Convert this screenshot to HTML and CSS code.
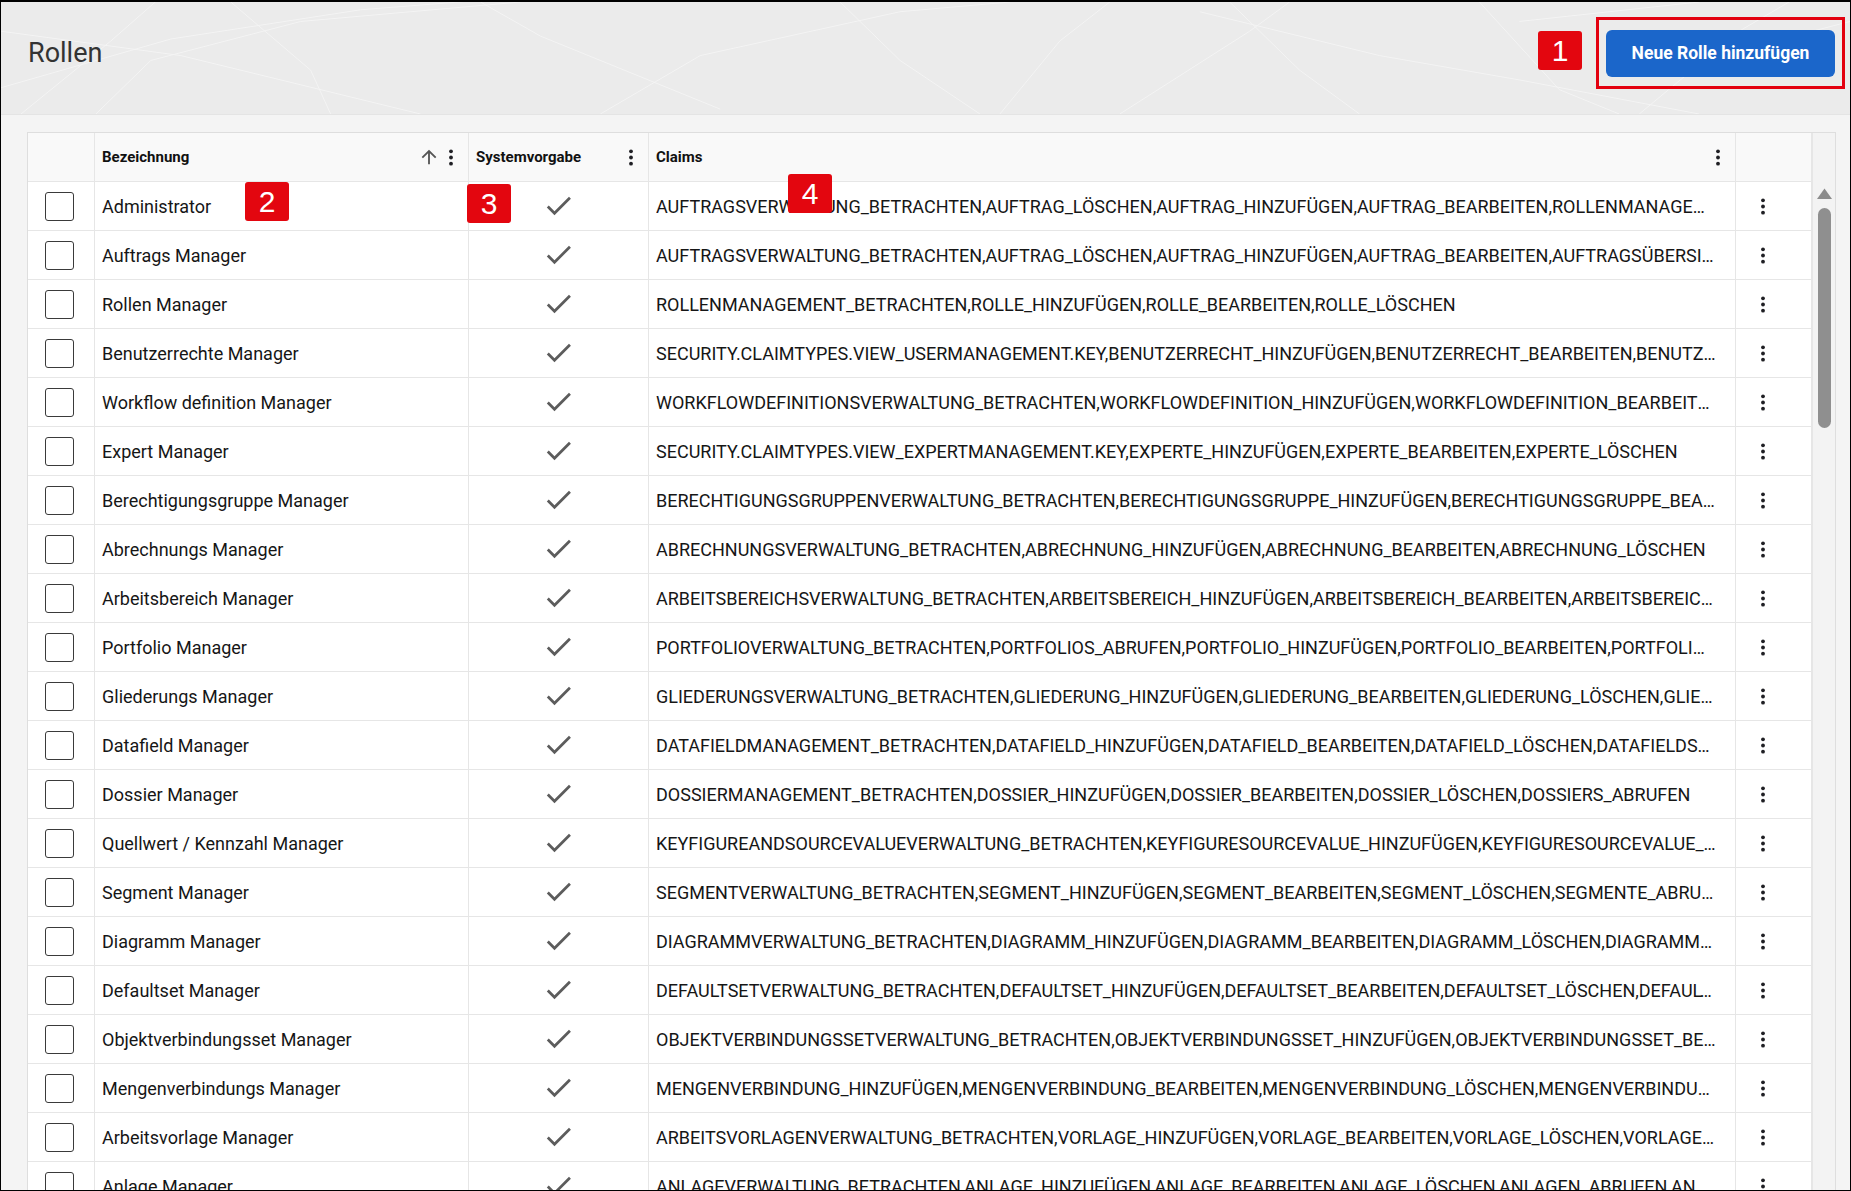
FILE: index.html
```html
<!DOCTYPE html>
<html lang="de">
<head>
  <meta charset="UTF-8">
  <meta name="viewport" content="width=device-width, initial-scale=1.0">
  <title>Rollen</title>
  <link rel="stylesheet" href="styles.css">
</head>
<body>
  <div class="page">
    <header class="page-header">
      <svg class="header-mesh" viewBox="0 0 1851 115" preserveAspectRatio="none">
        <g stroke="#ffffff" stroke-width="1" fill="none" opacity="0.45">
          <polyline points="0,88 170,38 360,8 520,-5"/>
          <polyline points="20,115 110,40 160,-5"/>
          <polyline points="95,115 150,60 300,20 520,0"/>
          <polyline points="230,0 310,70 330,115"/>
          <polyline points="0,30 180,55 420,115"/>
          <polyline points="480,0 540,35 720,110"/>
          <polyline points="600,115 700,55 900,10 1010,0"/>
          <polyline points="840,0 900,60 980,115"/>
          <polyline points="1000,115 1060,40 1110,0"/>
          <polyline points="1120,115 1250,30 1290,0"/>
          <polyline points="1200,10 1380,55 1520,80 1700,115"/>
          <polyline points="1230,0 1300,70 1360,115"/>
          <polyline points="1480,0 1560,90 1620,115"/>
          <polyline points="1520,20 1700,0"/>
          <polyline points="1640,115 1740,30 1790,0"/>
          <polyline points="1700,60 1851,20"/>
        </g>
      </svg>
      <h1 class="page-title">Rollen</h1>
      <button class="primary-btn">Neue Rolle hinzufügen</button>
    </header>

    <main class="content">
      <div class="table">
        <div class="grid" id="grid">
          <div class="row head">
            <div class="cell"></div>
            <div class="cell title-cell">
              <span>Bezeichnung</span>
              <span class="head-tools">
                <svg class="sort-icon" viewBox="0 0 24 24"><path d="M4 12l1.41 1.41L11 7.83V20h2V7.83l5.58 5.59L20 12l-8-8-8 8z"/></svg>
                <svg class="kebab" viewBox="0 0 6 20"><circle cx="3" cy="3.5" r="2"/><circle cx="3" cy="10" r="2"/><circle cx="3" cy="16.5" r="2"/></svg>
              </span>
            </div>
            <div class="cell title-cell">
              <span>Systemvorgabe</span>
              <svg class="kebab" viewBox="0 0 6 20"><circle cx="3" cy="3.5" r="2"/><circle cx="3" cy="10" r="2"/><circle cx="3" cy="16.5" r="2"/></svg>
            </div>
            <div class="cell title-cell">
              <span>Claims</span>
              <svg class="kebab" viewBox="0 0 6 20"><circle cx="3" cy="3.5" r="2"/><circle cx="3" cy="10" r="2"/><circle cx="3" cy="16.5" r="2"/></svg>
            </div>
            <div class="cell"></div>
          </div>
        </div>
        <div class="scrollbar">
          <svg class="scroll-arrow" viewBox="0 0 15 11"><path d="M7.5 0.5L15 11H0z"/></svg>
          <div class="scroll-thumb"></div>
        </div>
      </div>
    </main>

    <div class="callout-frame"></div>
    <div class="marker m1">1</div>
    <div class="marker m2">2</div>
    <div class="marker m3">3</div>
    <div class="marker m4">4</div>
  </div>

  <script>
    const roles = [
      ['Administrator', 'AUFTRAGSVERWALTUNG_BETRACHTEN,AUFTRAG_LÖSCHEN,AUFTRAG_HINZUFÜGEN,AUFTRAG_BEARBEITEN,ROLLENMANAGEMENT_BETRACHTEN,ROLLE_HINZUFÜGEN'],
      ['Auftrags Manager', 'AUFTRAGSVERWALTUNG_BETRACHTEN,AUFTRAG_LÖSCHEN,AUFTRAG_HINZUFÜGEN,AUFTRAG_BEARBEITEN,AUFTRAGSÜBERSICHT_ABRUFEN'],
      ['Rollen Manager', 'ROLLENMANAGEMENT_BETRACHTEN,ROLLE_HINZUFÜGEN,ROLLE_BEARBEITEN,ROLLE_LÖSCHEN'],
      ['Benutzerrechte Manager', 'SECURITY.CLAIMTYPES.VIEW_USERMANAGEMENT.KEY,BENUTZERRECHT_HINZUFÜGEN,BENUTZERRECHT_BEARBEITEN,BENUTZERRECHT_LÖSCHEN'],
      ['Workflow definition Manager', 'WORKFLOWDEFINITIONSVERWALTUNG_BETRACHTEN,WORKFLOWDEFINITION_HINZUFÜGEN,WORKFLOWDEFINITION_BEARBEITEN,WORKFLOWDEFINITION_LÖSCHEN'],
      ['Expert Manager', 'SECURITY.CLAIMTYPES.VIEW_EXPERTMANAGEMENT.KEY,EXPERTE_HINZUFÜGEN,EXPERTE_BEARBEITEN,EXPERTE_LÖSCHEN'],
      ['Berechtigungsgruppe Manager', 'BERECHTIGUNGSGRUPPENVERWALTUNG_BETRACHTEN,BERECHTIGUNGSGRUPPE_HINZUFÜGEN,BERECHTIGUNGSGRUPPE_BEARBEITEN,BERECHTIGUNGSGRUPPE_LÖSCHEN'],
      ['Abrechnungs Manager', 'ABRECHNUNGSVERWALTUNG_BETRACHTEN,ABRECHNUNG_HINZUFÜGEN,ABRECHNUNG_BEARBEITEN,ABRECHNUNG_LÖSCHEN'],
      ['Arbeitsbereich Manager', 'ARBEITSBEREICHSVERWALTUNG_BETRACHTEN,ARBEITSBEREICH_HINZUFÜGEN,ARBEITSBEREICH_BEARBEITEN,ARBEITSBEREICH_LÖSCHEN'],
      ['Portfolio Manager', 'PORTFOLIOVERWALTUNG_BETRACHTEN,PORTFOLIOS_ABRUFEN,PORTFOLIO_HINZUFÜGEN,PORTFOLIO_BEARBEITEN,PORTFOLIO_LÖSCHEN'],
      ['Gliederungs Manager', 'GLIEDERUNGSVERWALTUNG_BETRACHTEN,GLIEDERUNG_HINZUFÜGEN,GLIEDERUNG_BEARBEITEN,GLIEDERUNG_LÖSCHEN,GLIEDERUNGEN_ABRUFEN'],
      ['Datafield Manager', 'DATAFIELDMANAGEMENT_BETRACHTEN,DATAFIELD_HINZUFÜGEN,DATAFIELD_BEARBEITEN,DATAFIELD_LÖSCHEN,DATAFIELDS_ABRUFEN'],
      ['Dossier Manager', 'DOSSIERMANAGEMENT_BETRACHTEN,DOSSIER_HINZUFÜGEN,DOSSIER_BEARBEITEN,DOSSIER_LÖSCHEN,DOSSIERS_ABRUFEN'],
      ['Quellwert / Kennzahl Manager', 'KEYFIGUREANDSOURCEVALUEVERWALTUNG_BETRACHTEN,KEYFIGURESOURCEVALUE_HINZUFÜGEN,KEYFIGURESOURCEVALUE_BEARBEITEN'],
      ['Segment Manager', 'SEGMENTVERWALTUNG_BETRACHTEN,SEGMENT_HINZUFÜGEN,SEGMENT_BEARBEITEN,SEGMENT_LÖSCHEN,SEGMENTE_ABRUFEN'],
      ['Diagramm Manager', 'DIAGRAMMVERWALTUNG_BETRACHTEN,DIAGRAMM_HINZUFÜGEN,DIAGRAMM_BEARBEITEN,DIAGRAMM_LÖSCHEN,DIAGRAMME_ABRUFEN'],
      ['Defaultset Manager', 'DEFAULTSETVERWALTUNG_BETRACHTEN,DEFAULTSET_HINZUFÜGEN,DEFAULTSET_BEARBEITEN,DEFAULTSET_LÖSCHEN,DEFAULTSETS_ABRUFEN'],
      ['Objektverbindungsset Manager', 'OBJEKTVERBINDUNGSSETVERWALTUNG_BETRACHTEN,OBJEKTVERBINDUNGSSET_HINZUFÜGEN,OBJEKTVERBINDUNGSSET_BEARBEITEN'],
      ['Mengenverbindungs Manager', 'MENGENVERBINDUNG_HINZUFÜGEN,MENGENVERBINDUNG_BEARBEITEN,MENGENVERBINDUNG_LÖSCHEN,MENGENVERBINDUNGEN_ABRUFEN'],
      ['Arbeitsvorlage Manager', 'ARBEITSVORLAGENVERWALTUNG_BETRACHTEN,VORLAGE_HINZUFÜGEN,VORLAGE_BEARBEITEN,VORLAGE_LÖSCHEN,VORLAGEN_ABRUFEN'],
      ['Anlage Manager', 'ANLAGEVERWALTUNG_BETRACHTEN,ANLAGE_HINZUFÜGEN,ANLAGE_BEARBEITEN,ANLAGE_LÖSCHEN,ANLAGEN_ABRUFEN,ANLAGE_EXPORTIEREN']
    ];

    const check = '<svg class="check" viewBox="3 5 18.6 14.6"><path d="M9 16.17L4.83 12l-1.42 1.41L9 19 21 7l-1.41-1.41z"/></svg>';
    const kebab = '<svg class="kebab" viewBox="0 0 6 20"><circle cx="3" cy="3.5" r="2"/><circle cx="3" cy="10" r="2"/><circle cx="3" cy="16.5" r="2"/></svg>';
    const grid = document.getElementById('grid');

    roles.forEach(function(role) {
      const row = document.createElement('div');
      row.className = 'row';
      row.innerHTML =
        '<div class="cell select-cell"><span class="checkbox"></span></div>' +
        '<div class="cell">' + role[0] + '</div>' +
        '<div class="cell center">' + check + '</div>' +
        '<div class="cell"><span class="claims">' + role[1] + '</span></div>' +
        '<div class="cell action-cell">' + kebab + '</div>';
      grid.appendChild(row);
    });
  </script>
</body>
</html>
```

FILE: styles.css
```css
* {
  box-sizing: border-box;
}
body {
  margin: 0;
  font-family: Roboto, "Liberation Sans", sans-serif;
  color: #161616;
  background: #000;
}
.page {
  position: relative;
  width: 1851px;
  height: 1191px;
  border: 1px solid #000;
  border-top-width: 2px;
  background: #f4f4f4;
  overflow: hidden;
  display: flex;
  flex-direction: column;
}
.page-header {
  position: relative;
  height: 113px;
  flex-shrink: 0;
  display: flex;
  align-items: center;
  justify-content: space-between;
  padding: 0 15px 10px 27px;
  background: #ebebeb;
  border-bottom: 1px solid #e4e4e4;
}
.header-mesh {
  position: absolute;
  left: 0;
  top: 0;
  width: 100%;
  height: 100%;
}
.page-title {
  position: relative;
  margin: 0;
  font-size: 27px;
  font-weight: 400;
  color: #333;
}
.primary-btn {
  position: relative;
  height: 47px;
  width: 229px;
  border: none;
  border-radius: 6px;
  background: #1b66ca;
  color: #fff;
  font-family: Roboto, sans-serif;
  font-size: 17.5px;
  font-weight: 700;
  cursor: pointer;
}
.content {
  flex: 1;
  min-height: 0;
  padding: 17px 14px 0 26px;
}
.table {
  display: flex;
  height: 1200px;
  border: 1px solid #dedede;
  background: #fff;
}
.grid {
  width: 1784px;
}
.row {
  display: grid;
  grid-template-columns: 67px 374px 180px 1087px 76px;
  height: 49px;
  border-bottom: 1px solid #e6e6e6;
  font-size: 18px;
}
.row.head {
  background: #f9f9f9;
  font-size: 15px;
  font-weight: 700;
  color: #111;
}
.cell {
  display: flex;
  align-items: center;
  min-width: 0;
  padding: 0 7px;
  border-right: 1px solid #e6e6e6;
  white-space: nowrap;
}
.cell.center {
  justify-content: center;
  padding: 0;
}
.select-cell {
  justify-content: center;
  padding: 0 3px 0 0;
}
.action-cell {
  padding-left: 24px;
}
.title-cell {
  justify-content: space-between;
  padding-right: 14px;
}
.head-tools {
  display: flex;
  align-items: center;
  gap: 8px;
}
.sort-icon {
  width: 22px;
  height: 22px;
  fill: #555;
}
.kebab {
  width: 6px;
  height: 19px;
  fill: #1f1f24;
}
.checkbox {
  width: 29px;
  height: 29px;
  border: 1.5px solid #3a3a3a;
  border-radius: 3px;
  background: #fff;
}
.check {
  width: 26px;
  height: 20px;
  fill: #5c5c5c;
}
.claims {
  display: block;
  overflow: hidden;
  text-overflow: ellipsis;
  padding-right: 12px;
}
.scrollbar {
  width: 23px;
  display: flex;
  flex-direction: column;
  align-items: center;
  padding-top: 55px;
  background: #f3f3f3;
  border-left: 1px solid #e6e6e6;
}
.scroll-arrow {
  width: 15px;
  height: 11px;
  fill: #8c8c8c;
}
.scroll-thumb {
  width: 13px;
  height: 220px;
  margin-top: 9px;
  border-radius: 7px;
  background: #8f8f8f;
}
.callout-frame {
  position: absolute;
  left: 1595px;
  top: 15px;
  width: 249px;
  height: 72px;
  border: 3px solid #e3000f;
}
.marker {
  position: absolute;
  width: 44px;
  height: 39px;
  border-radius: 3px;
  background: #e3060f;
  color: #fff;
  font-family: "Liberation Sans", Arial, sans-serif;
  font-size: 30px;
  line-height: 39px;
  text-align: center;
}
.m1 { left: 1537px; top: 29px; }
.m2 { left: 244px; top: 180px; }
.m3 { left: 466px; top: 182px; }
.m4 { left: 787px; top: 172px; }
```
